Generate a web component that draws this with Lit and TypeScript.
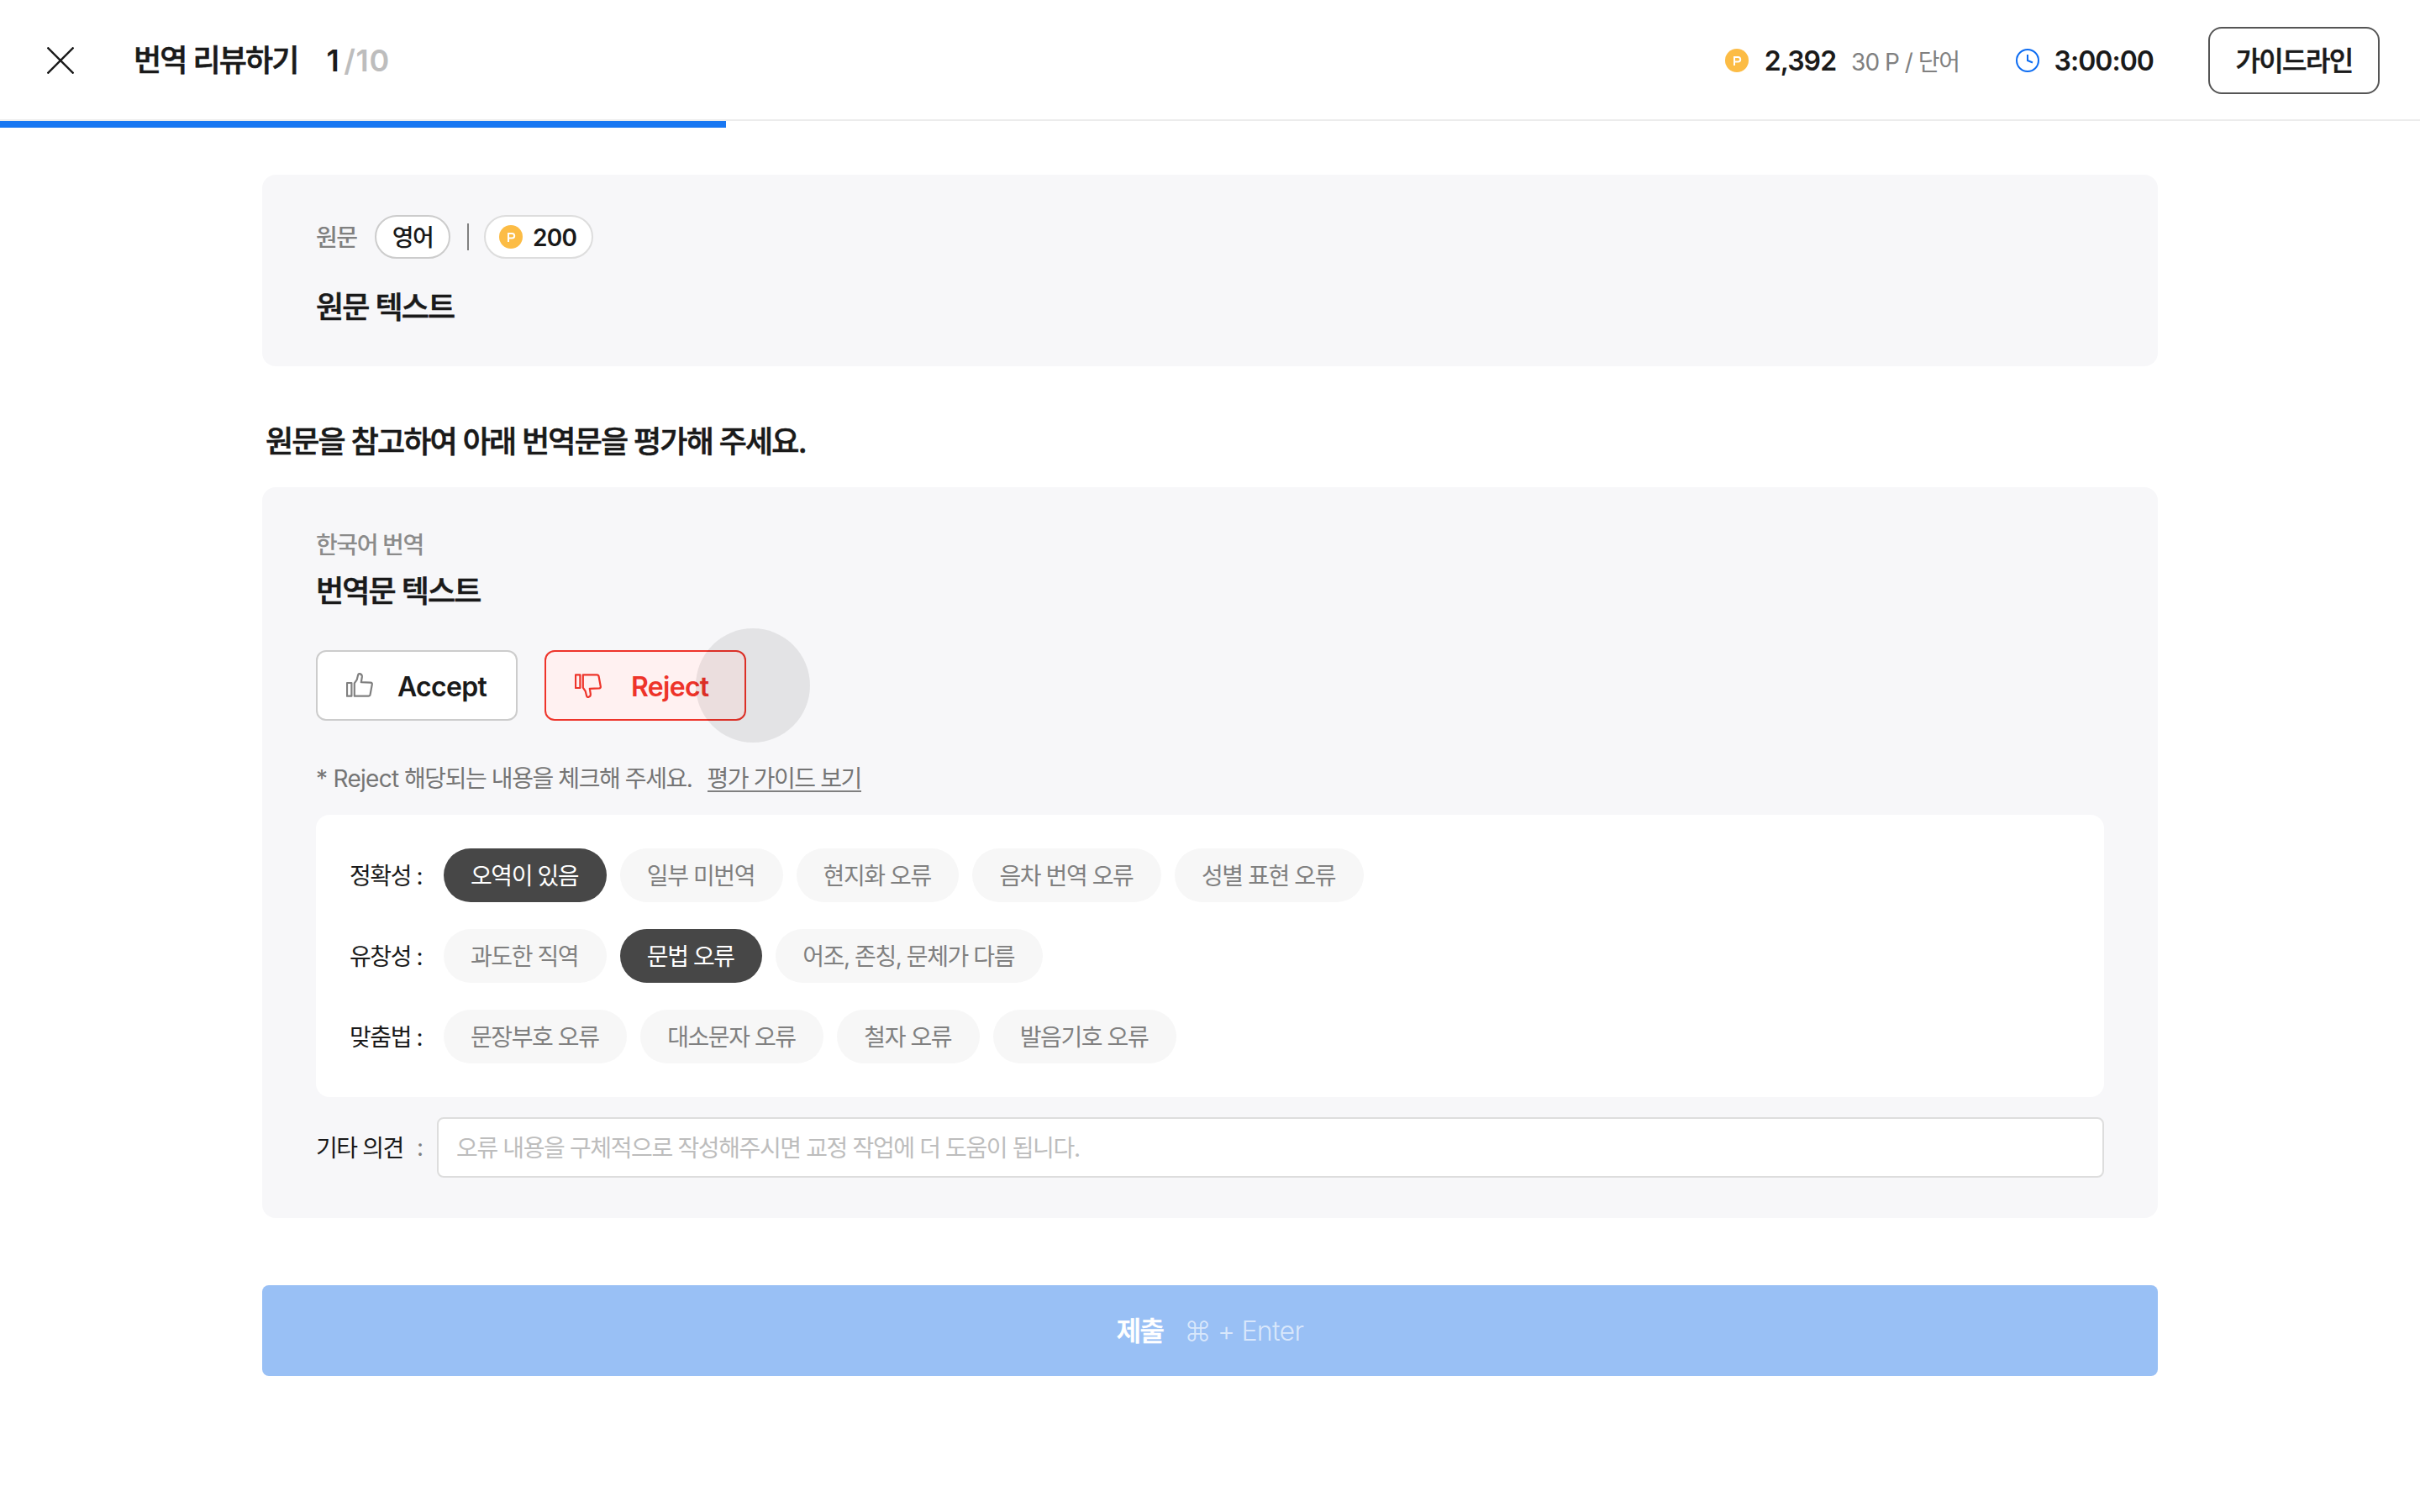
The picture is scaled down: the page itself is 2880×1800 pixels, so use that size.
import { LitElement, html, css, svg } from "lit";
import { customElement, property } from "lit/decorators.js";
import { classMap } from "lit/directives/class-map.js";

type Option = { label: string; on?: boolean };
type Group = { name: string; options: Option[] };

const GROUPS: Group[] = [
  {
    name: "정확성 :",
    options: [
      { label: "오역이 있음", on: true },
      { label: "일부 미번역" },
      { label: "현지화 오류" },
      { label: "음차 번역 오류" },
      { label: "성별 표현 오류" },
    ],
  },
  {
    name: "유창성 :",
    options: [
      { label: "과도한 직역" },
      { label: "문법 오류", on: true },
      { label: "어조, 존칭, 문체가 다름" },
    ],
  },
  {
    name: "맞춤법 :",
    options: [
      { label: "문장부호 오류" },
      { label: "대소문자 오류" },
      { label: "철자 오류" },
      { label: "발음기호 오류" },
    ],
  },
];

@customElement("point-coin")
export class PointCoin extends LitElement {
  static styles = css`
    :host { display: block; width: 28px; height: 28px; flex: none; }
    svg { display: block; }
  `;
  render() {
    return html`<svg width="28" height="28" viewBox="0 0 28 28" fill="none">
      <circle cx="14" cy="14" r="14" fill="#fcbc45" />
      <path d="M11 20V10H15.4A2.6 2.6 0 0 1 15.4 15.6H11" stroke="#fff" stroke-width="2" />
    </svg>`;
  }
}

@customElement("thumb-icon")
export class ThumbIcon extends LitElement {
  @property({ type: Boolean }) down = false;
  static styles = css`
    :host { display: block; width: 32px; height: 32px; flex: none; }
    svg { display: block; }
    .down { transform: scaleY(-1); }
  `;
  render() {
    const shape = svg`
      <path d="M1 13H6.4V28.7H1Z" />
      <path d="M9.8 28.7V13.4L12.6 9.4L14.2 3.2Q14.6 1.7 16.2 2.1Q19.2 2.9 18.8 6L17.8 12.2L29 12.6Q31.1 12.8 30.8 14.8L28.6 26.8Q28.2 28.7 26.4 28.7Z" />`;
    return html`<svg class=${classMap({ down: this.down })} width="32" height="32" viewBox="0 0 32 32"
      fill="none" stroke="currentColor" stroke-width="2.2" stroke-linejoin="round">${shape}</svg>`;
  }
}

@customElement("app-root")
export class AppRoot extends LitElement {
  static styles = css`
    :host {
      display: block;
      height: 1800px;
      overflow: hidden;
      background: #fff;
      color: #1a1a1a;
      font-family: Inter, "Noto Sans CJK KR", sans-serif;
      font-size: 28px;
      line-height: 40px;
      letter-spacing: -0.025em;
      white-space: nowrap;
    }
    * { box-sizing: border-box; }
    .ko { letter-spacing: -0.0505em; }
    .semi { font-weight: 500; -webkit-text-stroke: 0.6px currentColor; }
    .header {
      display: flex; align-items: center; height: 144px;
      padding: 2px 48px 0 56px; border-bottom: 2px solid #ececec;
    }
    .close { display: block; margin-right: 71px; }
    .name { font-size: 36px; margin-right: 34px; }
    .count { font-size: 36px; font-weight: 600; }
    .total { color: #bdbdbd; margin-left: 6px; letter-spacing: 0.02em; }
    .status { display: flex; align-items: center; margin-left: auto; }
    .num { font-size: 32px; font-weight: 600; margin-left: 19px; padding-top: 2px; letter-spacing: -0.03em; }
    .rate { color: #808080; margin: 4px 67px 0 18px; letter-spacing: -0.035em; }
    .time { margin-left: 18px; }
    .guide {
      display: flex; align-items: center; justify-content: center;
      width: 204px; height: 80px; margin-left: 65px; padding-top: 2px;
      border: 2px solid #555; border-radius: 16px; font-size: 32px;
    }
    .track { height: 8px; }
    .bar { height: 8px; background: #1877f2; }
    .main { width: 2256px; margin: 56px auto 0; }
    .card { background: #f7f7f9; border-radius: 16px; padding: 48px 64px; }
    .source { height: 228px; }
    .meta { display: flex; align-items: center; height: 52px; color: #808080; font-weight: 500; }
    .pill {
      display: flex; align-items: center; justify-content: center; height: 52px;
      background: #fff; border: 2px solid #ccc; border-radius: 26px; color: #1a1a1a;
    }
    .src { width: 49px; padding-top: 1px; }
    .lang { width: 90px; margin-left: 21px; padding-top: 1px; }
    .sep { width: 2px; height: 32px; background: #808080; margin: 0 18px 0 20px; }
    .points {
      justify-content: flex-start; width: 130px; padding-left: 16px; border-color: #ddd;
      font-weight: 600; gap: 12px;
    }
    .amount { padding-top: 2px; }
    .title { font-size: 36px; line-height: 52px; }
    .source .title { margin-top: 32px; }
    .ask { margin: 64px 0 0 4px; height: 80px; }
    .review { height: 870px; }
    .lab { color: #8b8b8b; font-weight: 500; margin-top: 1px; }
    .review .title { margin-top: 9px; }
    .choices { display: flex; gap: 32px; margin-top: 44px; }
    .btn {
      position: relative; display: flex; align-items: center; width: 240px; height: 84px;
      padding-left: 34px; gap: 29px; background: #fff; border: 2px solid #ccc; border-radius: 12px;
      font-size: 32px; font-weight: 600;
    }
    .word { padding-top: 3px; }
    .btn thumb-icon { color: #808080; }
    .btn.reject, .btn.reject thumb-icon { color: #ee342a; }
    .btn.reject { background: #fff1f1; border-color: #ee342a; gap: 35px; }
    .tap {
      position: absolute; left: 178px; top: -28px; width: 136px; height: 136px;
      border-radius: 50%; background: rgba(0, 0, 0, 0.08);
    }
    .note { display: flex; color: #757575; margin-top: 49px; height: 39px; }
    .link { margin-left: 18px; border-bottom: 2px solid #808080; height: 36px; }
    .panel {
      display: flex; flex-direction: column; gap: 32px; height: 336px; margin-top: 24px;
      padding: 40px; background: #fff; border-radius: 16px;
    }
    .row { display: flex; gap: 16px; height: 64px; align-items: center; }
    .row-name { width: 96px; padding-top: 1px; }
    .chip {
      display: flex; align-items: center; height: 64px; padding: 1px 33.6px 0 32px;
      border-radius: 32px; background: #f7f7f7; color: #808080;
    }
    .chip.on { background: #474747; color: #fff; }
    .etc { display: flex; align-items: center; margin-top: 24px; }
    .etc-name { width: 120px; padding-top: 1px; }
    .colon { width: 8px; color: #808080; }
    .input {
      display: flex; align-items: center; flex: 1; height: 72px; margin-left: 16px; padding: 1px 0 0 21px;
      background: #fff; border: 2px solid #ddd; border-radius: 8px; color: #bdbdbd;
      letter-spacing: -0.049em;
    }
    .submit {
      display: flex; align-items: center; justify-content: center; height: 108px; margin-top: 80px;
      padding-top: 2px; background: #99c0f5; border-radius: 8px; color: #fff; font-size: 32px;
    }
    .keys { margin-left: 25px; font-weight: 300; color: rgba(255, 255, 255, 0.65); }
  `;

  render() {
    return html`
      <header class="header">
        <svg class="close" width="32" height="32" viewBox="0 0 32 32" stroke="#1a1a1a" stroke-width="2.4">
          <path d="M0.5 0.5L31.5 31.5M31.5 0.5L0.5 31.5" />
        </svg>
        <span class="name ko semi">번역 리뷰하기</span>
        <span class="count">1<span class="total">/10</span></span>
        <div class="status">
          <point-coin></point-coin>
          <span class="num">2,392</span>
          <span class="rate">30 P / <span class="ko">단어</span></span>
          <svg width="28" height="28" viewBox="0 0 28 28" fill="none" stroke="#0c6cf2" stroke-width="2">
            <circle cx="14" cy="14" r="13" /><path d="M14 7V14L20 16.5" />
          </svg>
          <span class="num time">3:00:00</span>
          <div class="guide ko semi">가이드라인</div>
        </div>
      </header>
      <div class="track"><div class="bar" style="width:30%"></div></div>
      <main class="main">
        <section class="card source">
          <div class="meta">
            <span class="src ko">원문</span>
            <span class="pill lang ko">영어</span>
            <span class="sep"></span>
            <span class="pill points"><point-coin></point-coin><span class="amount">200</span></span>
          </div>
          <div class="title ko semi">원문 텍스트</div>
        </section>
        <div class="title ask ko semi">원문을 참고하여 아래 번역문을 평가해 주세요.</div>
        <section class="card review">
          <div class="lab ko">한국어 번역</div>
          <div class="title ko semi">번역문 텍스트</div>
          <div class="choices">
            <div class="btn"><thumb-icon></thumb-icon><span class="word">Accept</span></div>
            <div class="btn reject"><thumb-icon down></thumb-icon><span class="word">Reject</span><span class="tap"></span></div>
          </div>
          <div class="note">
            <span>* Reject<span class="ko">&nbsp;해당되는 내용을 체크해 주세요.</span></span>
            <span class="link ko">평가 가이드 보기</span>
          </div>
          <div class="panel">
            ${GROUPS.map(
              (g) => html`<div class="row">
                <span class="row-name ko">${g.name}</span>
                ${g.options.map(
                  (o) => html`<span class=${classMap({ chip: true, ko: true, on: !!o.on })}>${o.label}</span>`
                )}
              </div>`
            )}
          </div>
          <div class="etc">
            <span class="etc-name ko">기타 의견</span><span class="colon">:</span>
            <div class="input">오류 내용을 구체적으로 작성해주시면 교정 작업에 더 도움이 됩니다.</div>
          </div>
        </section>
        <div class="submit"><span class="ko semi">제출</span><span class="keys">⌘ + Enter</span></div>
      </main>
    `;
  }
}
